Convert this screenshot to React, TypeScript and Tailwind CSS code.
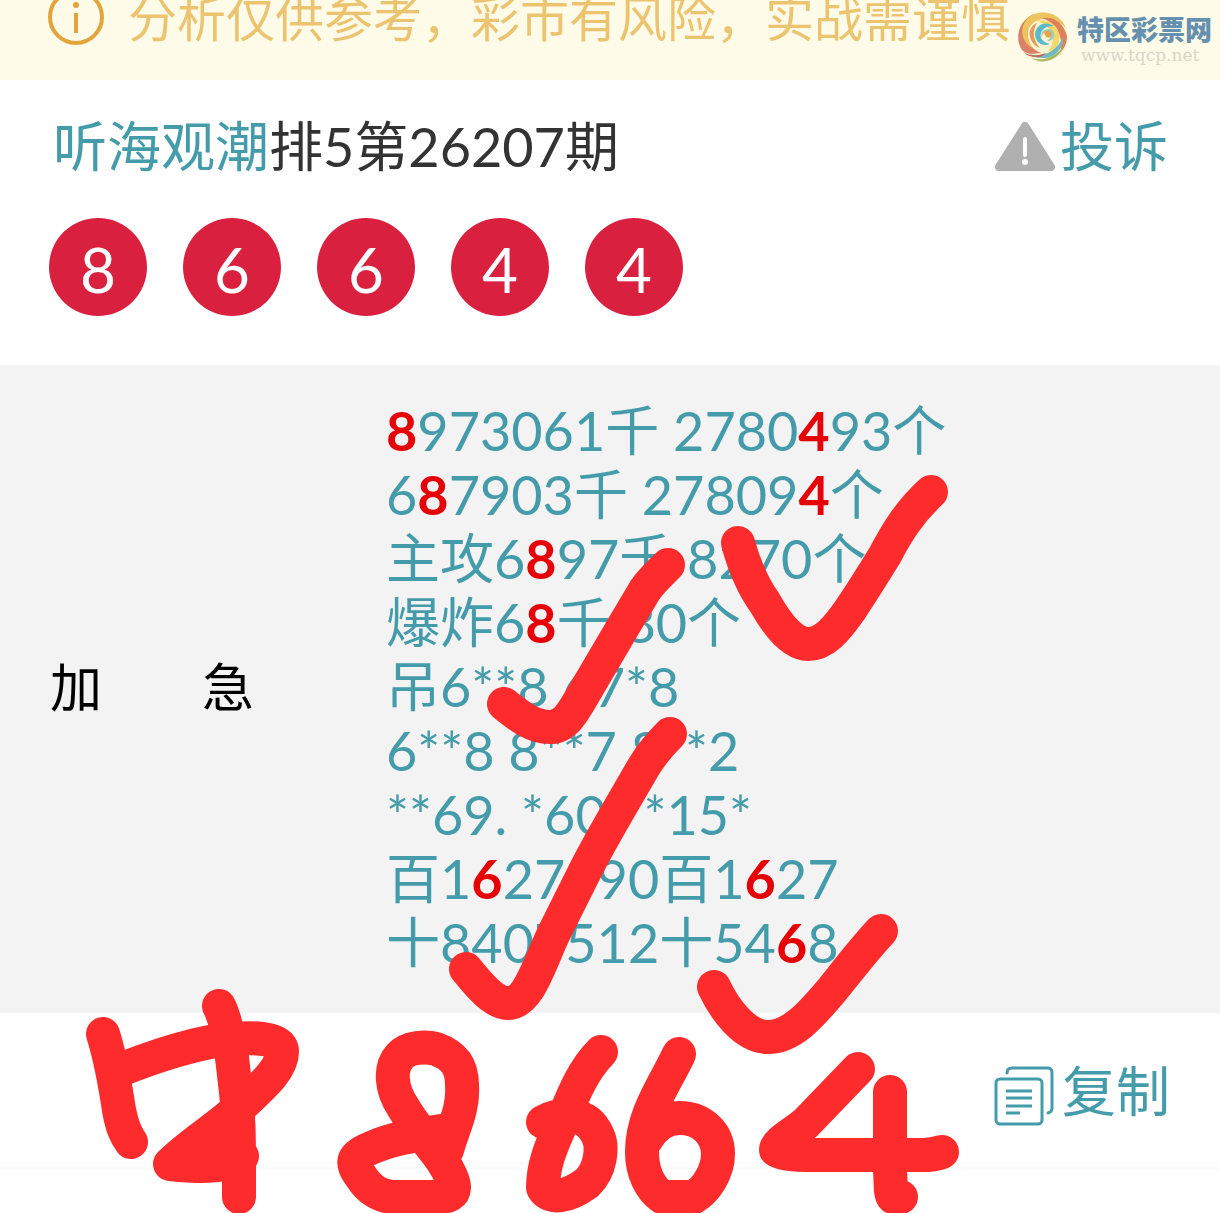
const tips = "分析仅供参考，彩市有风险，实战需谨慎";
const balls = [8, 6, 6, 4, 4];

// Digits wrapped in [] are the ones that hit
const lines = [
  "[8]973061千 2780[4]93个",
  "6[8]7903千 27809[4]个",
  "主攻6[8]97千 8270个",
  "爆炸6[8]千 80个",
  "吊6**8 67*8",
  "6**8 8**7 8**2",
  "**69. *60* *15*",
  "百1[6]27890百1[6]27",
  "十8407512十54[6]8",
];

const strokes = [
  "M738 543C744 565 752 585 765 603C779 628 794 644 808 644C824 644 836 630 850 610C866 586 874 573 885 555C896 534 909 512 931 492",
  "M504 704C520 717 533 727 550 727C566 727 574 710 583 695L620 632L645 590C652 580 659 574 668 565",
  "M670 734C657 747 650 756 643 768C623 803 602 837 584 873L554 933C540 962 529 1003 508 1003C494 1003 478 984 466 969",
  "M714 987C724 1008 744 1037 768 1037C793 1037 813 1012 832 990C848 970 864 949 881 931",
  "M103 1034C112 1063 116 1090 119 1110C122 1126 125 1134 131 1142",
  "M120 1070C155 1056 180 1048 210 1042C248 1036 282 1036 282 1052C282 1070 260 1088 240 1107C216 1129 190 1144 170 1164C200 1167 227 1168 242 1156",
  "M185 1160L230 1125V1160Z",
  "M219 1006C227 1022 231 1045 234 1075C238 1105 239 1130 239 1150V1197",
  "M447 1130C422 1134 394 1138 376 1146C350 1156 350 1162 362 1178C368 1188 380 1197 394 1197H438C460 1197 457 1184 443 1162C433 1147 415 1128 403 1107C391 1089 389 1068 400 1056C408 1047 426 1046 436 1049C456 1056 462 1068 462 1085C464 1110 452 1130 447 1150",
  "M601 1052C582 1071 572 1098 563 1120C550 1148 543 1166 543 1188C550 1200 568 1197 587 1183C601 1170 603 1147 598 1136C587 1111 562 1112 543 1122",
  "M679 1054C664 1086 642 1114 642 1152C642 1172 650 1188 662 1197H694C706 1190 718 1172 718 1154C718 1132 700 1118 680 1118C665 1118 653 1127 646 1140",
  "M858 1069L806 1123C796 1132 776 1142 776 1150C780 1154 796 1155 806 1155H923C930 1155 936 1154 942 1152",
  "M890 1092V1170C891 1184 890 1193 893 1197H901",
];

const InfoIcon = () => (
  <svg className="h-14 w-14 shrink-0" viewBox="0 0 56 56" fill="none" stroke="#e2a53c">
    <circle cx="28" cy="27" r="26" strokeWidth="4" />
    <path d="M28 23V43" strokeWidth="4" />
    <circle cx="28" cy="15" r="3" fill="#e2a53c" stroke="none" />
  </svg>
);

const WarningIcon = () => (
  <svg className="h-[52px] w-[62px]" viewBox="0 0 62 52">
    <path d="M31 5L57 46H5Z" fill="#b0b0b0" stroke="#b0b0b0" strokeWidth="8" strokeLinejoin="round" />
    <path d="M31 18V34" stroke="#fff" strokeWidth="4" strokeLinecap="round" />
    <circle cx="31" cy="41" r="3" fill="#fff" />
  </svg>
);

const CopyIcon = () => (
  <svg className="mt-2 h-[60px] w-[60px]" viewBox="0 0 60 60" fill="none" stroke="#449baa" strokeLinecap="round" strokeLinejoin="round">
    <rect x="2" y="13" width="46" height="45" rx="4" strokeWidth="3" />
    <path d="M13 7Q13 2 18 2H54Q58 2 58 7V42Q58 46 54 47" strokeWidth="3" />
    <path d="M12 25H38M12 32H38M12 40H38M12 47H26" strokeWidth="3" strokeLinecap="butt" />
  </svg>
);

const SiteLogo = () => (
  <svg className="h-[52px] w-[52px]" viewBox="0 0 52 52">
    <circle cx="26" cy="26" r="25" fill="#fdf3d0" />
    {/* outer arms */}
    <path d="M17 3C2 9-3 27 5 39C10 44 18 43 24 42C12 38 5 24 17 3Z" fill="#d98268" />
    <path d="M12 6C25-3 43 2 49 17C41 8 27 4 16 12C8 19 9 30 17 38C4 32 1 16 12 6Z" fill="#eec45f" />
    <path d="M25 7C38 5 47 13 50 25C50 33 47 38 43 42C47 30 42 13 25 7Z" fill="#df805a" />
    <path d="M20 10C35 7 45 18 42 31C40 37 36 40 31 41C39 32 38 16 20 10Z" fill="#f3d768" />
    <path d="M46 26C47 38 37 48 25 47C19 47 14 45 11 43C27 47 40 40 46 26Z" fill="#72b9c4" />
    <path d="M47 35C42 48 27 55 14 47C27 51 38 46 47 35Z" fill="#a8b860" />
    <path d="M6 41C14 46 22 45 29 42C26 47 13 48 6 41Z" fill="#cf5b4c" />
    {/* inner curls */}
    <path d="M20 12C8 17 12 33 23 37C16 30 15 20 20 12Z" fill="#e39b58" />
    <path d="M37 15C28 9 18 14 18 24C19 32 26 36 33 33C26 31 22 27 24 22C26 16 32 15 37 15Z" fill="#5cb9c8" />
    <path d="M25 27C22 21 29 16 35 19C40 24 36 31 30 30C35 27 34 22 30 21C27 21 25 23 25 27Z" fill="#8fcfc4" />
    <path d="M27 21C31 18 36 21 34 25C32 28 28 27 27 21Z" fill="#eda046" />
  </svg>
);

const PickLine = ({ text }: { text: string }) => (
  <p className="whitespace-pre">
    {text.split(/(\[\d\])/).map((part, i) =>
      part.startsWith("[") ? (
        <b key={i} className="font-bold text-[#e60008]">{part[1]}</b>
      ) : (
        <span key={i}>{part}</span>
      )
    )}
  </p>
);

const App = () => {
  return (
    <div className="relative min-h-screen overflow-hidden bg-white font-[Lato,'Noto_Sans_CJK_SC',sans-serif] text-[54px] leading-[64px] text-[#449baa]">
      {/* Notice bar */}
      <header className="flex items-center bg-[#fffbe9] pb-11 pl-12 text-[49px] text-[#ecc470]">
        <div className="flex h-9 items-center gap-6 whitespace-nowrap">
          <InfoIcon />
          <p>{tips}</p>
        </div>
      </header>

      {/* Site watermark */}
      <div className="absolute top-[9px] right-2 flex items-center gap-2">
        <SiteLogo />
        <div className="flex flex-col font-['Noto_Sans_CJK_SC',sans-serif]">
          <span className="text-[27px] leading-[40px] font-black text-[#6691ae]">特区彩票网</span>
          <span className="-mt-1 pl-1 font-['DejaVu_Serif',serif] text-[17px] leading-[20px] text-[#d8d6c8]">www.tqcp.net</span>
        </div>
      </div>

      {/* Issue and result */}
      <section className="pt-[35px] pr-[52px] pb-[49px] pl-[49px]">
        <div className="flex items-center justify-between pl-1">
          <h1 className="text-[#333]">
            <a href="#author" className="text-[#449baa]">听海观潮</a>排5第26207期
          </h1>
          <button type="button" className="flex items-center gap-1">
            <WarningIcon />
            投诉
          </button>
        </div>
        <div className="mt-[39px] flex gap-9">
          {balls.map((n, i) => (
            <span key={i} className="flex h-[98px] w-[98px] items-center justify-center rounded-full bg-[#d9213f] pt-1 text-[62px] text-white">
              {n}
            </span>
          ))}
        </div>
      </section>

      {/* Picks */}
      <section className="flex items-center bg-[#f3f3f3] pt-[34px] pb-[38px] pl-[50px]">
        <h2 className="flex w-[204px] justify-between text-[52px] text-black">
          <span>加</span>
          <span>急</span>
        </h2>
        <div className="ml-[132px]">
          {lines.map((text) => (
            <PickLine key={text} text={text} />
          ))}
        </div>
      </section>

      {/* Copy */}
      <footer className="flex justify-end border-b-8 border-[#fcfcfc] px-[50px] pt-[45px] pb-9">
        <button type="button" className="flex items-center gap-2">
          <CopyIcon />
          复制
        </button>
      </footer>

      {/* Handwritten marks */}
      <svg
        className="pointer-events-none absolute top-0 left-0 h-[1213px] w-[1220px]"
        viewBox="0 0 1220 1213"
        fill="none"
        stroke="#fe2b2d"
        strokeWidth="34"
        strokeLinecap="round"
        strokeLinejoin="round"
      >
        {strokes.map((d) => (
          <path key={d} d={d} />
        ))}
      </svg>
    </div>
  );
};

export default App;
